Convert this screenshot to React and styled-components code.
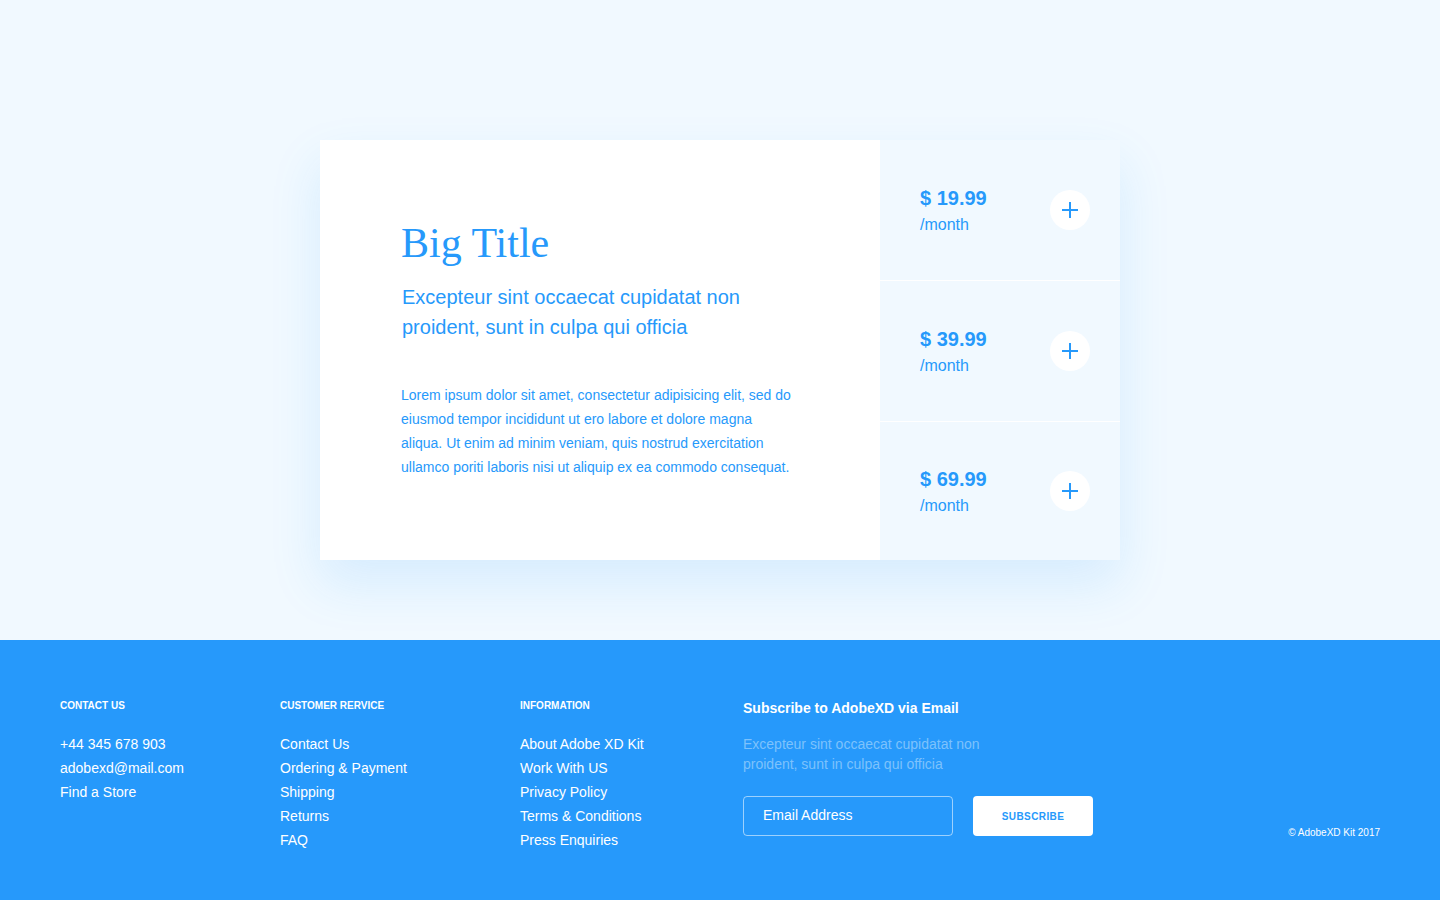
import React from 'react';
import styled, { createGlobalStyle } from 'styled-components';

const GlobalStyle = createGlobalStyle`
  * { box-sizing: border-box; }
  body {
    margin: 0;
    background: #F1F9FF;
    font-family: "Liberation Sans", Arial, sans-serif;
  }
`;

const Hero = styled.section`
  height: 640px;
  padding-top: 140px;
  display: flex;
  justify-content: center;
`;

const Card = styled.div`
  width: 800px;
  height: 420px;
  display: flex;
  box-shadow: 0 24px 48px rgba(38, 153, 251, 0.13);
`;

const Content = styled.div`
  width: 560px;
  background: #fff;
  padding: 79px 80px 0 81px;
  color: #2699FB;
`;

const Title = styled.h1`
  margin: 0;
  font-family: "Liberation Serif", "Times New Roman", serif;
  font-weight: 400;
  font-size: 42px;
  line-height: 48px;
`;

const Lead = styled.p`
  margin: 15px 0 0 1px;
  font-size: 20px;
  line-height: 30px;
  max-width: 360px;
`;

const Body = styled.p`
  margin: 41px 0 0;
  font-size: 14px;
  line-height: 24px;
  max-width: 394px;
`;

const Prices = styled.div`
  width: 240px;
  display: flex;
  flex-direction: column;
  background: #F1F9FF;
`;

const PriceRow = styled.div`
  height: ${p => p.$h}px;
  display: flex;
  align-items: center;
  justify-content: space-between;
  padding: 0 30px 0 40px;
  border-top: ${p => (p.$first ? 'none' : '1px solid #fff')};
`;

const PriceText = styled.div`
  color: #2699FB;
  padding-top: 2px;
`;

const Amount = styled.div`
  font-size: 20px;
  font-weight: 700;
  line-height: 24px;
`;

const Period = styled.div`
  font-size: 16px;
  line-height: 24px;
  margin-top: 3px;
`;

const AddButton = styled.button`
  width: 40px;
  height: 40px;
  border: none;
  border-radius: 50%;
  background: #fff;
  display: flex;
  align-items: center;
  justify-content: center;
  padding: 0;
  cursor: pointer;
`;

const Footer = styled.footer`
  height: 260px;
  background: #2699FB;
  color: #fff;
  padding: 60px 60px 0;
  display: flex;
`;

const Column = styled.div`
  width: ${p => p.$w}px;
  flex-shrink: 0;
`;

const Heading = styled.h4`
  margin: 0;
  font-size: 10px;
  line-height: 12px;
  font-weight: 700;
  text-transform: uppercase;
`;

const Links = styled.ul`
  list-style: none;
  margin: 20px 0 0;
  padding: 0;
  font-size: 14px;
  line-height: 24px;
`;

const SubHeading = styled.h4`
  margin: 0;
  font-size: 14px;
  line-height: 16px;
  font-weight: 700;
`;

const SubText = styled.p`
  margin: 18px 0 0;
  font-size: 14px;
  line-height: 20px;
  color: #7DC2FC;
  max-width: 260px;
`;

const Form = styled.form`
  display: flex;
  gap: 20px;
  margin-top: 22px;
`;

const EmailInput = styled.input`
  width: 210px;
  height: 40px;
  border: 1px solid rgba(255, 255, 255, 0.55);
  border-radius: 4px;
  background: transparent;
  padding: 0 19px 2px;
  font-family: inherit;
  font-size: 14px;
  color: #fff;
  outline: none;

  &::placeholder {
    color: #fff;
    opacity: 1;
  }
`;

const SubscribeButton = styled.button`
  width: 120px;
  height: 40px;
  border: none;
  border-radius: 4px;
  background: #fff;
  color: #2699FB;
  font-family: inherit;
  font-size: 10px;
  font-weight: 700;
  letter-spacing: 0.4px;
  padding-top: 2px;
  cursor: pointer;
`;

const Copyright = styled.div`
  margin-left: auto;
  margin-top: 127px;
  font-size: 10px;
  line-height: 12px;
  align-self: flex-start;
`;

const Plus = () => (
  <svg width="16" height="16" viewBox="0 0 16 16">
    <path d="M8 0v16M0 8h16" stroke="#2699FB" strokeWidth="2" />
  </svg>
);

const plans = [
  { price: '$ 19.99', h: 140 },
  { price: '$ 39.99', h: 141 },
  { price: '$ 69.99', h: 139 },
];

const columns = [
  { title: 'Contact Us', w: 220, items: ['+44 345 678 903', 'adobexd@mail.com', 'Find a Store'] },
  { title: 'Customer Rervice', w: 240, items: ['Contact Us', 'Ordering & Payment', 'Shipping', 'Returns', 'FAQ'] },
  { title: 'Information', w: 223, items: ['About Adobe XD Kit', 'Work With US', 'Privacy Policy', 'Terms & Conditions', 'Press Enquiries'] },
];

const App = () => (
  <>
    <GlobalStyle />
    <Hero>
      <Card>
        <Content>
          <Title>Big Title</Title>
          <Lead>Excepteur sint occaecat cupidatat non proident, sunt in culpa qui officia</Lead>
          <Body>
            Lorem ipsum dolor sit amet, consectetur adipisicing elit, sed do eiusmod tempor
            incididunt ut ero labore et dolore magna aliqua. Ut enim ad minim veniam, quis
            nostrud exercitation ullamco poriti laboris nisi ut aliquip ex ea commodo consequat.
          </Body>
        </Content>
        <Prices>
          {plans.map((plan, i) => (
            <PriceRow key={plan.price} $h={plan.h} $first={i === 0}>
              <PriceText>
                <Amount>{plan.price}</Amount>
                <Period>/month</Period>
              </PriceText>
              <AddButton aria-label="Add">
                <Plus />
              </AddButton>
            </PriceRow>
          ))}
        </Prices>
      </Card>
    </Hero>
    <Footer>
      {columns.map(col => (
        <Column key={col.title} $w={col.w}>
          <Heading>{col.title}</Heading>
          <Links>
            {col.items.map(item => (
              <li key={item}>{item}</li>
            ))}
          </Links>
        </Column>
      ))}
      <Column $w={360}>
        <SubHeading>Subscribe to AdobeXD via Email</SubHeading>
        <SubText>Excepteur sint occaecat cupidatat non proident, sunt in culpa qui officia</SubText>
        <Form onSubmit={e => e.preventDefault()}>
          <EmailInput type="email" placeholder="Email Address" />
          <SubscribeButton type="submit">SUBSCRIBE</SubscribeButton>
        </Form>
      </Column>
      <Copyright>© AdobeXD Kit 2017</Copyright>
    </Footer>
  </>
);

export default App;
